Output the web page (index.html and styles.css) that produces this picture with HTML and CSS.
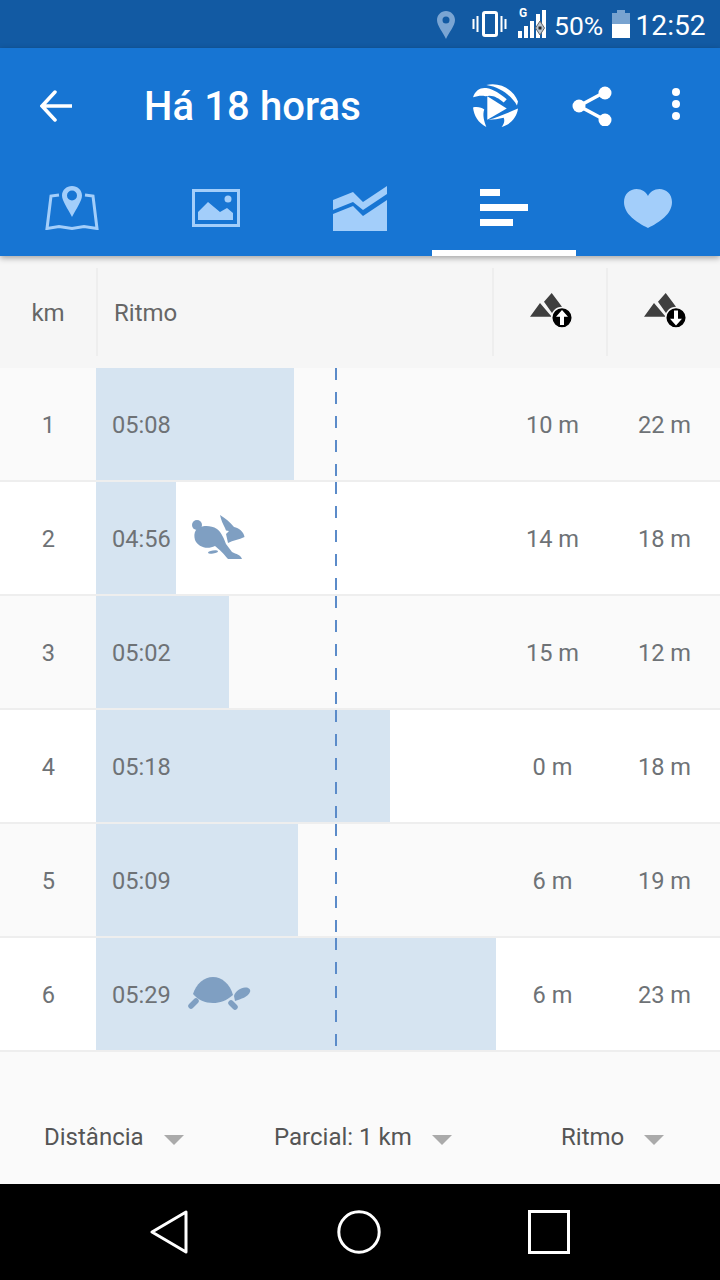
FILE: index.html
```html
<!DOCTYPE html>
<html lang="pt">
<head>
<meta charset="utf-8">
<title>Há 18 horas</title>
<link rel="stylesheet" href="styles.css">
</head>
<body>
<div class="screen">
  <div class="status">
    <svg class="st-pin" viewBox="0 0 18 28"><path fill="#7aa5d3" fill-rule="evenodd" d="M9 0C4 0 0 4 0 9c0 6 6 12 9 19 3-7 9-13 9-19 0-5-4-9-9-9zm0 5.500a3.500 3.500 0 1 1 0 7 3.500 3.500 0 0 1 0-7z"/></svg>
    <svg class="st-vib" viewBox="0 0 35 26"><rect x="11.500" y="1.500" width="13" height="23" rx="1.500" fill="none" stroke="#fff" stroke-width="3"/><path d="M1.500 8v10M5.500 5v16M29.500 5v16M33.500 8v10" stroke="#fff" stroke-width="2" fill="none"/></svg>
    <div class="st-signal">
      <span class="st-g">G</span>
      <svg class="st-bars" viewBox="0 0 28 28"><path fill="#fff" d="M0 21h4v7H0zM6 16h4v12H6zM12 11h4v17h-4zM18 4h4v24h-4zM24 0h4v28h-4z"/><path fill="#b8c4d0" stroke="#666" stroke-width="1" d="M22 11l4.500 7-4.500 7-4.500-7z"/><rect x="20.500" y="16.500" width="3" height="3" fill="#222"/></svg>
    </div>
    <span class="st-pct">50%</span>
    <svg class="st-bat" viewBox="0 0 18 28"><path fill="#78a3d0" d="M5 0h8v3h5v11H0V3h5z"/><path fill="#fff" d="M0 14h18v14H0z"/></svg>
    <span class="st-time">12:52</span>
  </div>

  <header class="appbar">
    <div class="toolbar">
      <svg class="tb-back" viewBox="0 0 32 32"><path d="M32 16H3M15 2L2 16l13 14" fill="none" stroke="#fff" stroke-width="3.500" stroke-linejoin="miter" stroke-linecap="round"/></svg>
      <h1 class="title">Há 18 horas</h1>
      <svg class="tb-play" viewBox="0 0 46 44"><g fill="#fff"><path d="M15 12l19 12-19 11z"/><path d="M1 13C3 6 9 3 14 4c7 1 14 6 20 11l-3 3C25 13 20 10 13 12 9 11 5 12 1 13z"/><path d="M14 1c12-3 26 3 31 16l-1 4C39 12 28 3 14 1z"/><path d="M1 23c4-1 9 0 11 2-2 5 0 12 2 17C6 38 2 31 1 23z"/><path d="M16 35c8-2 20-7 29-11-1 9-8 16-16 18 3-4 3-7 2-9-5 1-10 2-15 2z"/></g></svg>
      <svg class="tb-share" viewBox="0 0 40 40"><path d="M33 6L7 20l26 14" fill="none" stroke="#fff" stroke-width="3.500"/><circle cx="33" cy="7" r="6.500" fill="#fff"/><circle cx="7" cy="20" r="6.500" fill="#fff"/><circle cx="33" cy="34" r="6.500" fill="#fff"/></svg>
      <svg class="tb-more" viewBox="0 0 8 32"><circle cx="4" cy="4" r="4" fill="#fff"/><circle cx="4" cy="16" r="4" fill="#fff"/><circle cx="4" cy="28" r="4" fill="#fff"/></svg>
    </div>
    <nav class="tabs">
      <div class="tab">
        <svg class="ic-map" viewBox="0 0 54 44"><path d="M14 9L6 10 2 42.500l12-2 13 2 12-2 13 2L48 10l-8-1" fill="none" stroke="#a3cefa" stroke-width="3"/><path fill="#a3cefa" fill-rule="evenodd" d="M27 0c-5.500 0-10 4-10 9.500C17 15 23 23 27 31c4-8 10-16 10-21.500C37 4 32.500 0 27 0zm0 4.500a5 5 0 1 1 0 10 5 5 0 0 1 0-10z"/></svg>
      </div>
      <div class="tab">
        <svg class="ic-img" viewBox="0 0 48 38"><rect x="1.500" y="1.500" width="45" height="35" fill="none" stroke="#a3cefa" stroke-width="3"/><circle cx="36" cy="10" r="3.500" fill="#a3cefa"/><path fill="#a3cefa" d="M6 31v-8l10-10 12 10 7-4 6 5v7z"/></svg>
      </div>
      <div class="tab">
        <svg class="ic-chart" viewBox="0 0 54 45"><g fill="#a3cefa"><path d="M0 14l20-8 10 10L54 0v8L30 24 20 16 0 24z"/><path d="M0 28l20-8 10 10 24-16v31H0z"/></g></svg>
      </div>
      <div class="tab active">
        <svg class="ic-bars" viewBox="0 0 48 38"><path fill="#fff" d="M0 0h20v7H0zM0 15h48v7H0zM0 30h33v7H0z"/></svg>
      </div>
      <div class="tab">
        <svg class="ic-heart" viewBox="0 0 48 40"><path fill="#a3cefa" d="M24 39C12 33 0 25 0 13 0 5 6 0 12.500 0 18 0 22 3 24 7c2-4 6-7 11.500-7C42 0 48 5 48 13c0 12-12 20-24 26z"/></svg>
      </div>
    </nav>
  </header>

  <div class="thead">
    <div class="th th-km"><span>km</span></div>
    <div class="th th-pace"><span>Ritmo</span></div>
    <div class="th th-ic">
      <svg class="ic-mount" viewBox="0 0 44 38"><path fill="#3f3f3f" d="M11 11l11.700 13.700H1zM22.700 1L33 14.700 23.700 22 15 9.700z"/><circle cx="33" cy="25.700" r="10.300" fill="#000" stroke="#f6f6f6" stroke-width="1.500"/><path fill="#fff" d="M33 18l6 6.700h-4V33h-4v-8.300h-4z"/></svg>
    </div>
    <div class="th th-ic">
      <svg class="ic-mount" viewBox="0 0 44 38"><path fill="#3f3f3f" d="M11 11l11.700 13.700H1zM22.700 1L33 14.700 23.700 22 15 9.700z"/><circle cx="33" cy="25.700" r="10.300" fill="#000" stroke="#f6f6f6" stroke-width="1.500"/><path fill="#fff" d="M33 33.500l-6-6.700h4V18.500h4v8.300h4z"/></svg>
    </div>
  </div>

  <div class="row">
    <div class="c-km"><span>1</span></div>
    <div class="c-pace"><div class="bar" style="width:198px"></div><div class="dash"></div><div class="pace-val"><span>05:08</span></div></div>
    <div class="c-val"><span>10 m</span></div><div class="c-val"><span>22 m</span></div>
  </div>
  <div class="row alt">
    <div class="c-km"><span>2</span></div>
    <div class="c-pace"><div class="bar" style="width:80px"></div><div class="dash"></div><div class="pace-val"><span>04:56</span>
      <svg class="ic-rabbit" viewBox="20 14 55 46"><g fill="#7f9fc2"><circle cx="26" cy="25" r="5"/><path d="M25 30c3-4 13-6 21-1 5 4 7 10 9 15l6 8c4 2 9 3 10 7H57c-5-6-8-9-13-13-8 4-17 1-20-6-1-4-1-7 1-10z"/><ellipse cx="42" cy="52" rx="5" ry="1.500" transform="rotate(-8 42 52)"/><path d="M49 15c5 3 10 7 14 12 5 1 10 5 10.500 10-5.500 3-11.500 3-16.500 6l-2-9 3-3-3-.5-1-2.500c-2-4-4-8-5-13z"/></g></svg>
    </div></div>
    <div class="c-val"><span>14 m</span></div><div class="c-val"><span>18 m</span></div>
  </div>
  <div class="row">
    <div class="c-km"><span>3</span></div>
    <div class="c-pace"><div class="bar" style="width:133px"></div><div class="dash"></div><div class="pace-val"><span>05:02</span></div></div>
    <div class="c-val"><span>15 m</span></div><div class="c-val"><span>12 m</span></div>
  </div>
  <div class="row alt">
    <div class="c-km"><span>4</span></div>
    <div class="c-pace"><div class="bar" style="width:294px"></div><div class="dash"></div><div class="pace-val"><span>05:18</span></div></div>
    <div class="c-val"><span>0 m</span></div><div class="c-val"><span>18 m</span></div>
  </div>
  <div class="row">
    <div class="c-km"><span>5</span></div>
    <div class="c-pace"><div class="bar" style="width:202px"></div><div class="dash"></div><div class="pace-val"><span>05:09</span></div></div>
    <div class="c-val"><span>6 m</span></div><div class="c-val"><span>19 m</span></div>
  </div>
  <div class="row alt">
    <div class="c-km"><span>6</span></div>
    <div class="c-pace"><div class="bar" style="width:400px"></div><div class="dash"></div><div class="pace-val"><span>05:29</span>
      <svg class="ic-turtle" viewBox="16 16 64 34"><g fill="#7f9fc2"><path d="M22 34c3-10 11-17 20-17s17 7 20 18c-7 6-13 8-20 8-8 0-15-3-20-9z"/><path d="M63 36c1-5 7-8 11-8.500 4-.5 6 2.500 5 4.500-2 5-9 7-15 9z"/></g><path d="M25 41l-5 5M60 43l4 4" stroke="#7f9fc2" stroke-width="5.500" stroke-linecap="round" fill="none"/></svg>
    </div></div>
    <div class="c-val"><span>6 m</span></div><div class="c-val"><span>23 m</span></div>
  </div>

  <div class="filters">
    <div class="filter"><span>Distância</span><i class="caret"></i></div>
    <div class="filter"><span>Parcial: 1 km</span><i class="caret"></i></div>
    <div class="filter"><span>Ritmo</span><i class="caret"></i></div>
  </div>

  <div class="navbar">
    <svg class="nv-back" viewBox="0 0 38 44"><path d="M36 2v40L2 22z" fill="none" stroke="#fff" stroke-width="3" stroke-linejoin="round"/></svg>
    <svg class="nv-home" viewBox="0 0 44 44"><circle cx="22" cy="22" r="20.200" fill="none" stroke="#fff" stroke-width="3"/></svg>
    <svg class="nv-recent" viewBox="0 0 42 44"><rect x="1.500" y="1.500" width="39" height="41" fill="none" stroke="#fff" stroke-width="3"/></svg>
  </div>
</div>
</body>
</html>
```

FILE: styles.css
```css
* { box-sizing: border-box; }
html, body { margin: 0; padding: 0; }
body { width: 720px; height: 1280px; overflow: hidden; font-family: Roboto, "Liberation Sans", sans-serif; background: #fafafa; }
svg { display: block; flex: none; }
.screen { width: 720px; height: 1280px; display: flex; flex-direction: column; }

/* status bar */
.status { height: 48px; background: #125aa3; color: #fff; display: flex; align-items: center; padding-left: 437px; }
.st-pin { width: 18px; height: 28px; margin-top: 2px; }
.st-vib { width: 35px; height: 26px; margin-left: 17px; }
.st-signal { position: relative; width: 28px; height: 28px; margin-left: 11px; }
.st-bars { width: 28px; height: 28px; }
.st-g { position: absolute; left: 1px; top: -3px; font-size: 12px; font-weight: 700; line-height: 12px; }
.st-pct { font-size: 26.500px; margin-top: 2px; margin-left: 8px; width: 58px; }
.st-bat { width: 18px; height: 28px; }
.st-time { font-size: 28.200px; margin-top: 2px; margin-left: 5.500px; }

/* app bar */
.appbar { height: 208px; background: #1775d3; box-shadow: 0 2px 6px rgba(0,0,0,.35); position: relative; z-index: 2; display: flex; flex-direction: column; }
.toolbar { height: 116px; display: flex; align-items: center; padding-left: 40px; }
.tb-back { width: 32px; height: 32px; }
.title { margin: 2px 0 0 72px; width: 328px; font-size: 40px; font-weight: 500; color: #fff; line-height: 60px; letter-spacing: .1px; }
.tb-play { width: 47px; height: 45px; }
.tb-share { width: 40px; height: 40px; margin-left: 53px; }
.tb-more { width: 8px; height: 32px; margin-left: 60px; margin-top: -4px; }
.tabs { flex: 1; display: grid; grid-template-columns: repeat(5, 144px); }
.tab { display: flex; justify-content: center; padding-top: 22px; }
.tab.active { border-bottom: 6px solid #fff; }
.ic-map { width: 54px; height: 44px; }
.ic-img { width: 48px; height: 38px; margin-top: 3px; }
.ic-chart { width: 54px; height: 45px; }
.ic-bars { width: 48px; height: 38px; margin-top: 3px; }
.ic-heart { width: 48px; height: 40px; margin-top: 3px; }

/* table */
.thead { height: 112px; background: #f6f6f6; display: grid; grid-template-columns: 96px 396px 114px 114px; color: #666; font-size: 24px; }
.th { display: flex; align-items: center; height: 88px; margin-top: 12px; }
.th span { padding-top: 2px; }
.th-km { justify-content: center; }
.th-pace { border-left: 2px solid #eeeeee; padding-left: 16px; }
.th-ic { border-left: 2px solid #eeeeee; padding-left: 35px; }
.ic-mount { width: 44px; height: 38px; margin-top: -2px; }

.row { height: 114px; border-bottom: 2px solid #eeeeee; background: #fafafa; display: grid; grid-template-columns: 96px 400px 112px 112px; color: #6e7276; font-size: 23.600px; }
.row.alt { background: #fff; }
.row span { padding-top: 2px; }
.c-km, .c-val { display: flex; align-items: center; justify-content: center; padding-left: 1px; }
.c-pace { display: grid; }
.bar, .dash, .pace-val { grid-area: 1 / 1; }
.bar { background: #d6e4f1; height: 112px; }
.dash { width: 2px; margin-left: 239px; height: 112px; background: repeating-linear-gradient(to bottom, #5b8bc9 0 12px, transparent 12px 24px); }
.pace-val { display: flex; align-items: center; padding-left: 16px; }
.ic-rabbit { width: 55px; height: 46px; margin-left: 20px; margin-top: -2px; }
.ic-turtle { width: 64px; height: 34px; margin-left: 16px; margin-top: -2px; }

/* filters */
.filters { flex: 1; display: grid; grid-template-columns: 274px 287px 1fr; align-items: center; padding-top: 38px; color: #555; font-size: 24px; }
.filter { display: flex; align-items: center; }
.filter:first-child { padding-left: 44px; }
.caret { width: 0; height: 0; border-left: 10px solid transparent; border-right: 10px solid transparent; border-top: 10px solid #aaa; margin-left: 20px; margin-top: 6px; }

/* nav bar */
.navbar { height: 96px; background: #000; display: flex; align-items: center; padding-left: 150px; }
.nv-back { width: 38px; height: 44px; }
.nv-home { width: 44px; height: 44px; margin-left: 149px; }
.nv-recent { width: 42px; height: 44px; margin-left: 147px; }
```
